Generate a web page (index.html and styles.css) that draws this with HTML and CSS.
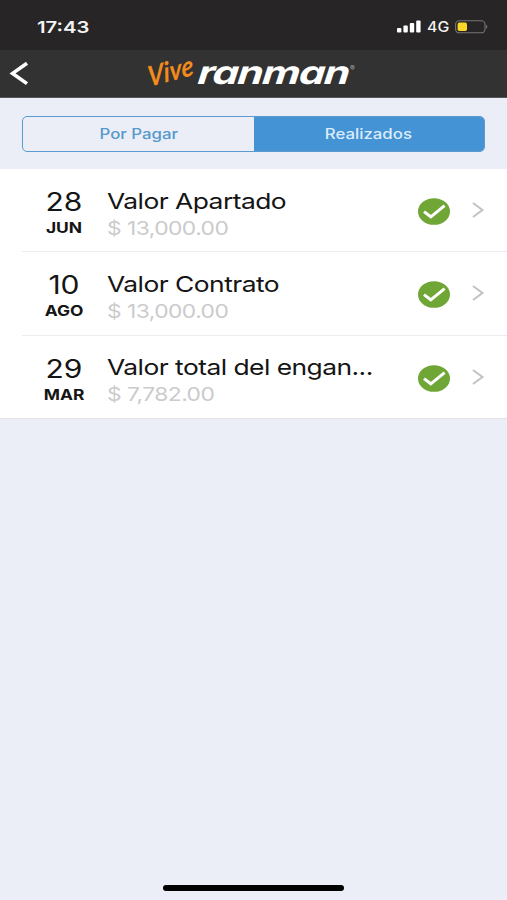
FILE: index.html
```html
<!DOCTYPE html>
<html lang="es">
<head>
    <meta charset="UTF-8">
    <meta name="viewport" content="width=device-width, initial-scale=1.0">
    <title>Pagos</title>
    <link rel="stylesheet" href="styles.css">
</head>
<body>

    <div class="status-bar">
        <span class="wide time">17:43</span>
        <svg class="signal" width="24" height="13" viewBox="0 0 24 13">
            <rect x="0" y="8" width="4.4" height="4.4" rx="1"/>
            <rect x="6.4" y="5.6" width="4.4" height="6.8" rx="1"/>
            <rect x="12.8" y="3" width="4.4" height="9.4" rx="1"/>
            <rect x="19.2" y="0.4" width="4.4" height="12" rx="1"/>
        </svg>
        <span class="wide network">4G</span>
        <svg class="battery" width="34" height="14" viewBox="0 0 34 14">
            <rect x="0.6" y="0.8" width="29.4" height="12" rx="3.6" fill="none" stroke="#777576" stroke-width="1.1"/>
            <rect x="2.6" y="2.6" width="9.4" height="8.4" rx="1.8" fill="#fbd726"/>
            <path d="M31.2 4.6q2.4 2.2 0 4.4z" fill="#777576"/>
        </svg>
    </div>

    <header class="navbar">
        <svg class="back" width="20" height="26" viewBox="0 0 20 26">
            <path d="M18 2.2 3.6 12.4 18 22.6" fill="none" stroke="#fff" stroke-width="3.6"/>
        </svg>
        <svg class="logo" width="224" height="46" viewBox="0 0 224 46">
            <text class="logo-vive" transform="translate(4 36) rotate(-15) skewX(-8)" textLength="47" lengthAdjust="spacingAndGlyphs">Vive</text>
            <text class="logo-name" transform="translate(52 33) skewX(-6)" textLength="151" lengthAdjust="spacingAndGlyphs">ranman</text>
            <text class="logo-mark" x="205" y="20">®</text>
        </svg>
    </header>

    <div class="tabs">
        <div class="tab"><span class="wide">Por Pagar</span></div>
        <div class="tab active"><span class="wide">Realizados</span></div>
    </div>

    <ul class="payments">
        <li class="payment">
            <div class="date">
                <span class="wide day">28</span>
                <span class="wide month">JUN</span>
            </div>
            <div class="info">
                <span class="wide title">Valor Apartado</span>
                <span class="wide amount">$ 13,000.00</span>
            </div>
            <svg class="check" width="32" height="27" viewBox="0 0 32 27">
                <ellipse cx="16" cy="13.5" rx="16" ry="13.3" fill="#6fa636"/>
                <path d="M6 13.6 12.8 18.8 26.6 7.6" fill="none" stroke="#fff" stroke-width="3"/>
            </svg>
            <svg class="arrow" width="12" height="16" viewBox="0 0 12 16">
                <path d="M1 1 10.4 8 1 15" fill="none" stroke="#c3c3c6" stroke-width="2.1"/>
            </svg>
        </li>
        <li class="payment">
            <div class="date">
                <span class="wide day">10</span>
                <span class="wide month">AGO</span>
            </div>
            <div class="info">
                <span class="wide title">Valor Contrato</span>
                <span class="wide amount">$ 13,000.00</span>
            </div>
            <svg class="check" width="32" height="27" viewBox="0 0 32 27">
                <ellipse cx="16" cy="13.5" rx="16" ry="13.3" fill="#6fa636"/>
                <path d="M6 13.6 12.8 18.8 26.6 7.6" fill="none" stroke="#fff" stroke-width="3"/>
            </svg>
            <svg class="arrow" width="12" height="16" viewBox="0 0 12 16">
                <path d="M1 1 10.4 8 1 15" fill="none" stroke="#c3c3c6" stroke-width="2.1"/>
            </svg>
        </li>
        <li class="payment">
            <div class="date">
                <span class="wide day">29</span>
                <span class="wide month">MAR</span>
            </div>
            <div class="info">
                <span class="wide title">Valor total del engan...</span>
                <span class="wide amount">$ 7,782.00</span>
            </div>
            <svg class="check" width="32" height="27" viewBox="0 0 32 27">
                <ellipse cx="16" cy="13.5" rx="16" ry="13.3" fill="#6fa636"/>
                <path d="M6 13.6 12.8 18.8 26.6 7.6" fill="none" stroke="#fff" stroke-width="3"/>
            </svg>
            <svg class="arrow" width="12" height="16" viewBox="0 0 12 16">
                <path d="M1 1 10.4 8 1 15" fill="none" stroke="#c3c3c6" stroke-width="2.1"/>
            </svg>
        </li>
    </ul>

    <div class="home-bar"></div>

</body>
</html>
```

FILE: styles.css
```css
* {
    box-sizing: border-box;
}

/* General body styling */
body {
    margin: 0;
    height: 900px;
    display: flex;
    flex-direction: column;
    overflow: hidden;
    background-color: #ebeef6;
    font-family: Inter, "Liberation Sans", sans-serif;
    color: #151515;
}

svg {
    display: block;
    flex: none;
    overflow: visible;
}

/* Extended text */
.wide {
    display: block;
    white-space: nowrap;
    transform: scaleX(1.2);
}

/* Status bar */
.status-bar {
    height: 50px;
    padding: 3px 18px 0 37px;
    display: flex;
    align-items: center;
    background-color: #272526;
    color: #f4f4f4;
}

.time {
    margin-right: auto;
    font-size: 16.5px;
    font-weight: 600;
    transform: scaleX(1.23);
    transform-origin: left;
}

.signal {
    fill: #fff;
}

.network {
    width: 21px;
    margin: 0 7px 0 6px;
    font-size: 14px;
    font-weight: 500;
    transform: scaleX(1.13);
    transform-origin: left;
}

/* Navbar */
.navbar {
    height: 48px;
    padding-left: 9px;
    display: flex;
    align-items: center;
    background-color: #323232;
    border-bottom: 1px solid #55555a;
}

.logo {
    margin-left: 116px;
}

.logo-vive {
    font-family: Lato, sans-serif;
    font-size: 28px;
    font-style: italic;
    font-weight: 700;
    fill: #f28a1c;
}

.logo-name {
    font-size: 32px;
    font-style: italic;
    font-weight: 700;
    letter-spacing: -1px;
    fill: #fff;
}

.logo-mark {
    font-size: 7px;
    fill: #aaa;
}

/* Tabs */
.tabs {
    height: 36px;
    margin: 18px 22px 17px 22px;
    display: flex;
    border: 1px solid #5b9bd0;
    border-radius: 5px;
    overflow: hidden;
}

.tab {
    flex: 1;
    padding-bottom: 2px;
    display: flex;
    align-items: center;
    justify-content: center;
    font-size: 14px;
    font-weight: 500;
    color: #5599cc;
}

.tab.active {
    background-color: #4393d5;
    color: #dcecfa;
}

/* Payments list */
.payments {
    margin: 0;
    padding: 0 0 0 22px;
    list-style: none;
    background-color: #fff;
    border-bottom: 1px solid #e3e3e7;
}

.payment {
    height: 83.3px;
    display: flex;
    border-bottom: 1px solid #ececee;
}

.payment:last-child {
    height: 82.5px;
    border-bottom: none;
}

.date {
    width: 84px;
    padding-top: 20px;
    text-align: center;
    line-height: 26px;
}

.day {
    font-size: 25px;
}

.month {
    font-size: 14.5px;
    font-weight: 700;
}

.info {
    width: 312px;
    padding: 18.5px 0 0 1px;
    line-height: 26px;
}

.title {
    margin-bottom: 2px;
    font-size: 22px;
    letter-spacing: -0.45px;
    transform-origin: left;
}

.amount {
    font-size: 19px;
    letter-spacing: -0.45px;
    color: #cbcbcd;
    transform-origin: left;
}

.check {
    margin-top: 29px;
}

.arrow {
    margin: 33px 0 0 22px;
}

/* Home indicator */
.home-bar {
    width: 181px;
    height: 6px;
    margin: auto auto 9px 163px;
    border-radius: 3px;
    background-color: #000;
}
```
